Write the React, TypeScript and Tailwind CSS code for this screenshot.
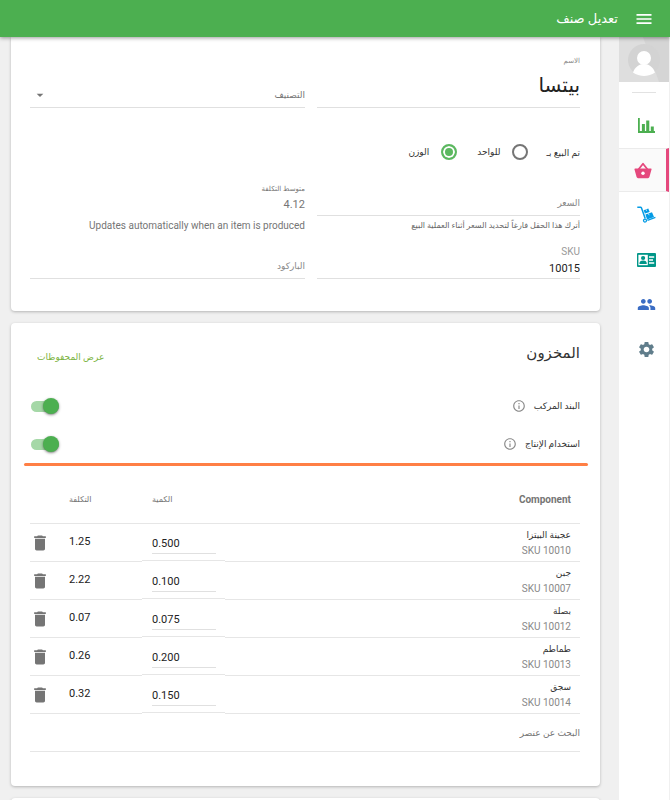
import React, { useState } from 'react';
import { MdMenu, MdPeople, MdSettings, MdDelete, MdInfoOutline, MdArrowDropDown } from 'react-icons/md';

type Component = { name: string; sku: string; quantity: string; cost: string };

const components: Component[] = [
  { name: 'عجينة البيتزا', sku: '10010', quantity: '0.500', cost: '1.25' },
  { name: 'جبن', sku: '10007', quantity: '0.100', cost: '2.22' },
  { name: 'بصلة', sku: '10012', quantity: '0.075', cost: '0.07' },
  { name: 'طماطم', sku: '10013', quantity: '0.200', cost: '0.26' },
  { name: 'سجق', sku: '10014', quantity: '0.150', cost: '0.32' },
];

const ChartIcon = () => (
  <svg viewBox="0 0 17 15" className="w-[17px] h-[15px]" fill="#4caf50">
    <path d="M0 0h1.8v13H17v2H0z" />
    <path d="M3.9 6h3v7.5h-3zM8.2 2.6h3.1v10.9H8.200zM12.800 8.600h3v4.900h-3z" />
  </svg>
);

const BasketIcon = () => (
  <svg viewBox="0 0 18 17" className="w-[18px] h-[17px]">
    <path d="M4.6 7.300 9 1.700l4.400 5.600" fill="none" stroke="#e5487d" strokeWidth="1.800" strokeLinejoin="round" />
    <path
      d="M1.200 6.500h15.600c.5 0 .8.400.7.900l-2.100 7.700c-.2.700-.7 1.100-1.400 1.100H4c-.7 0-1.200-.4-1.400-1.100L.5 7.400c-.1-.5.2-.9.7-.9z"
      fill="#e5487d"
    />
    <circle cx="9" cy="11.300" r="1.700" fill="#fff" />
  </svg>
);

const DollyIcon = () => (
  <svg viewBox="0 0 19 17" className="w-[19px] h-[17px]" fill="#039be5">
    <path d="M.3 1.200h3.300c.4 0 .6.2.8.600l3.800 10.700" fill="none" stroke="#039be5" strokeWidth="1.500" />
    <path d="M6.600 4.200 11.300 2.500l1.400 3.400L7.900 7.600z" />
    <path d="m8.400 8.600 6.600-2.400 2 4.700-6.900 2.600z" />
    <path d="m10.500 14.300 7.900-2.900" fill="none" stroke="#039be5" strokeWidth="1.300" />
    <circle cx="8" cy="14.600" r="1.500" fill="#fff" stroke="#039be5" strokeWidth="1.300" />
    <path d="m9 3.300.6 1.600M11.400 7.500l.7 1.700" stroke="#fff" strokeWidth="0.700" />
  </svg>
);

const CardIcon = () => (
  <svg viewBox="0 0 19 14" className="w-[19px] h-3.5">
    <rect width="19" height="14" rx="1" fill="#009688" />
    <path d="M1.4 1.8h9.4v10.4H1.4z" fill="#fff" />
    <circle cx="6.1" cy="5" r="2.1" fill="#009688" />
    <path d="M2.4 10.9c0-2.2 1.4-3.3 3.7-3.3s3.7 1.1 3.7 3.3z" fill="#009688" />
    <path d="M12 4h5.2M12 7h4M12 10h5.2" stroke="#fff" strokeWidth="1.3" />
  </svg>
);

const Avatar = () => (
  <svg viewBox="0 0 50 45" className="block w-full h-[45px]">
    <path d="M0 0h50v45H0z" fill="#dedede" />
    <path d="M24 0h26v45H40z" fill="#d5d5d5" />
    <circle cx="25" cy="23" r="16" fill="#d3d3d3" />
    <circle cx="25" cy="21" r="7" fill="#fff" />
    <path d="M14 35.5c2-5.5 6-8.5 11-8.5s9 3 11 8.5c-6 4.5-16 4.5-22 0z" fill="#fff" />
  </svg>
);

const navItems = [
  { label: 'التقارير', icon: <ChartIcon />, active: false },
  { label: 'الأصناف', icon: <BasketIcon />, active: true },
  { label: 'المخزون', icon: <DollyIcon />, active: false },
  { label: 'الموظفون', icon: <CardIcon />, active: false },
  { label: 'الزبائن', icon: <MdPeople size={19} color="#3b6dc4" />, active: false },
  { label: 'الإعدادات', icon: <MdSettings size={19} color="#607d8b" />, active: false },
];

const Toggle: React.FC<{ id: string; label: string }> = ({ id, label }) => {
  const [on, setOn] = useState(true);

  return (
    <div className="flex h-[38px] items-center justify-between">
      <div className="flex items-center gap-2">
        <label htmlFor={id}>{label}</label>
        <MdInfoOutline size={14} color="#8a8a8a" />
      </div>
      <input
        id={id}
        type="checkbox"
        role="switch"
        checked={on}
        onChange={(e) => setOn(e.target.checked)}
        dir="ltr"
        className="relative mx-px h-[11px] w-7 appearance-none rounded-full bg-gray-300 checked:bg-[#a5d8a7] before:absolute before:-top-[3px] before:left-0 before:size-4 before:rounded-full before:bg-white before:shadow before:shadow-black/40 checked:before:left-3 checked:before:bg-[#4caf50]"
      />
    </div>
  );
};

const radioClass =
  'size-4 appearance-none rounded-full border-2 border-[#757575] checked:border-[#5cb860] checked:bg-[#5cb860] checked:shadow-[inset_0_0_0_2px_white]';

const App: React.FC = () => {
  const [soldBy, setSoldBy] = useState('weight');

  return (
    <div
      dir="rtl"
      className="flex h-screen flex-col overflow-hidden bg-[#f0f0f0] font-[Roboto,'DejaVu_Sans',sans-serif] text-[9px] leading-3 text-[#333]"
    >
      {/* Top bar */}
      <header className="relative z-10 flex h-[37px] shrink-0 items-center gap-4 bg-[#4caf50] px-4 text-white shadow-[0_1px_4px_rgba(0,0,0,0.4)]">
        <button type="button" aria-label="القائمة">
          <MdMenu size={20} />
        </button>
        <h1 className="text-[13px] leading-5">تعديل صنف</h1>
      </header>

      <div className="flex min-h-0 flex-1">
        {/* Side navigation */}
        <nav className="ms-px w-[50px] shrink-0 bg-white">
          <Avatar />
          <div className="mx-auto mt-2.5 mb-2.5 h-px w-6 bg-[#e2e2e2]" />
          {navItems.map((item) => (
            <a
              key={item.label}
              href="#"
              aria-label={item.label}
              className={
                item.active
                  ? 'flex h-11 items-center justify-center border-s-[3px] border-y border-s-[#e5487d] border-y-[#ebebeb] bg-[#fafafa]'
                  : 'flex h-[45px] items-center justify-center pe-[5px]'
              }
            >
              {item.icon}
            </a>
          ))}
        </nav>

        <main className="flex min-w-0 flex-1 flex-col gap-3 overflow-hidden ps-[19px] pe-[11px]">
          {/* Item details */}
          <section className="shrink-0 rounded-b bg-white ps-5 pe-[19px] pt-[18px] pb-8 shadow-[0_1px_3px_rgba(0,0,0,0.25)]">
            <div className="grid grid-cols-[22fr_23fr] gap-x-3">
              <div className="flex h-[53px] flex-col border-b border-[#e0e0e0]">
                <label htmlFor="name" className="text-[7px] text-[#888]">الاسم</label>
                <input id="name" defaultValue="بيتسا" className="h-9 w-full text-xl text-[#222] outline-none" />
              </div>
              <div className="relative flex items-end border-b border-[#e0e0e0] pb-1">
                <select
                  aria-label="التصنيف"
                  className="h-4 w-full appearance-none bg-transparent text-[#757575] outline-none"
                >
                  <option>التصنيف</option>
                </select>
                <MdArrowDropDown size={16} color="#757575" className="pointer-events-none absolute bottom-1 left-0.5" />
              </div>
            </div>

            <fieldset className="mt-9 flex h-4 items-center">
              <legend className="float-right me-[18px] pt-px">تم البيع بـ</legend>
              <input
                id="each"
                type="radio"
                name="sold"
                checked={soldBy === 'each'}
                onChange={() => setSoldBy('each')}
                className={radioClass}
              />
              <label htmlFor="each" className="ms-3 me-5">للواحد</label>
              <input
                id="weight"
                type="radio"
                name="sold"
                checked={soldBy === 'weight'}
                onChange={() => setSoldBy('weight')}
                className={radioClass}
              />
              <label htmlFor="weight" className="ms-3">الوزن</label>
            </fieldset>

            <div className="mt-[22px] grid grid-cols-[22fr_23fr] gap-x-3">
              <div>
                <div className="flex h-[34px] items-end border-b border-[#e0e0e0] pb-1">
                  <input
                    aria-label="السعر"
                    placeholder="السعر"
                    className="h-4 w-full outline-none placeholder:text-[#888]"
                  />
                </div>
                <p className="mt-1 text-[8px] text-[#666]">أترك هذا الحقل فارغاً لتحديد السعر أثناء العملية البيع</p>
              </div>
              <div className="text-[#757575]">
                <p className="pt-px text-[7px]">متوسط التكلفة</p>
                <p className="h-[21px] pt-0.5 text-[11px] leading-4">4.12</p>
                <p className="mt-1 text-right text-[10px]" dir="ltr">
                  Updates automatically when an item is produced
                </p>
              </div>
            </div>

            <div className="mt-3.5 grid grid-cols-[22fr_23fr] gap-x-3">
              <div className="flex h-[33px] flex-col border-b border-[#e0e0e0]">
                <label htmlFor="sku" className="text-[10px] text-[#999]">SKU</label>
                <input id="sku" defaultValue="10015" className="h-5 w-full text-[11px] text-[#222] outline-none" />
              </div>
              <div className="flex items-end border-b border-[#e0e0e0] pb-1">
                <input
                  aria-label="الباركود"
                  placeholder="الباركود"
                  className="h-4 w-full outline-none placeholder:text-[#888]"
                />
              </div>
            </div>
          </section>

          {/* Inventory */}
          <section className="shrink-0 rounded bg-white ps-5 pe-[19px] pt-4 pb-[34px] shadow-[0_1px_3px_rgba(0,0,0,0.25)]">
            <div className="mb-5 flex h-7 items-center justify-between">
              <h2 className="text-[15px] leading-6">المخزون</h2>
              <a href="#" className="me-[7px] pt-2 text-[#7cb342]">عرض المحفوظات</a>
            </div>

            <Toggle id="composite" label="البند المركب" />
            <Toggle id="production" label="استخدام الإنتاج" />

            <div className="-ms-2 -me-1.5 h-[3px] rounded-full bg-[#ff7f45]" />

            <table className="w-full border-separate border-spacing-0">
              <thead>
                <tr className="h-[58px] text-[#757575]">
                  <th className="border-b border-[#e6e6e6] ps-[9px] pt-2.5 text-start text-[10px] font-bold">Component</th>
                  <th className="w-[83px] border-b border-[#e6e6e6] pt-2.5 pe-2.5 text-end text-[8px] font-normal">الكمية</th>
                  <th className="w-[82px] border-b border-[#e6e6e6] pt-2.5 pe-[9px] text-end text-[8px] font-normal">التكلفة</th>
                  <th className="w-[30px] border-b border-[#e6e6e6]" aria-label="حذف" />
                </tr>
              </thead>
              <tbody>
                {components.map((item) => (
                  <tr key={item.sku} className="h-[38px]">
                    <td className="border-b border-[#e6e6e6] ps-[9px]">
                      <p className="leading-[15px]">{item.name}</p>
                      <p className="text-[10px] leading-[15px] text-[#888]">SKU {item.sku}</p>
                    </td>
                    <td className="p-0 align-top">
                      <div className="h-[37px] border-b border-[#e6e6e6] ps-[9px] pe-2.5 pt-2.5">
                        <input
                          aria-label={item.name}
                          defaultValue={item.quantity}
                          dir="ltr"
                          className="block h-5 w-full border-b border-[#e0e0e0] text-[11px] text-[#222] outline-none"
                        />
                      </div>
                    </td>
                    <td className="border-b border-[#e6e6e6] pe-[9px] pb-0.5 text-end text-[11px] text-[#222]">{item.cost}</td>
                    <td className="border-b border-[#e6e6e6]">
                      <button type="button" aria-label="حذف" className="ms-auto block">
                        <MdDelete size={20} color="#757575" />
                      </button>
                    </td>
                  </tr>
                ))}
              </tbody>
            </table>
            <input
              aria-label="البحث عن عنصر"
              placeholder="البحث عن عنصر"
              className="block h-[38px] w-full border-b border-[#e6e6e6] outline-none placeholder:text-[#757575]"
            />
          </section>

          <section className="h-10 shrink-0 rounded bg-white shadow-[0_1px_3px_rgba(0,0,0,0.25)]" />
        </main>
      </div>
    </div>
  );
};

export default App;
